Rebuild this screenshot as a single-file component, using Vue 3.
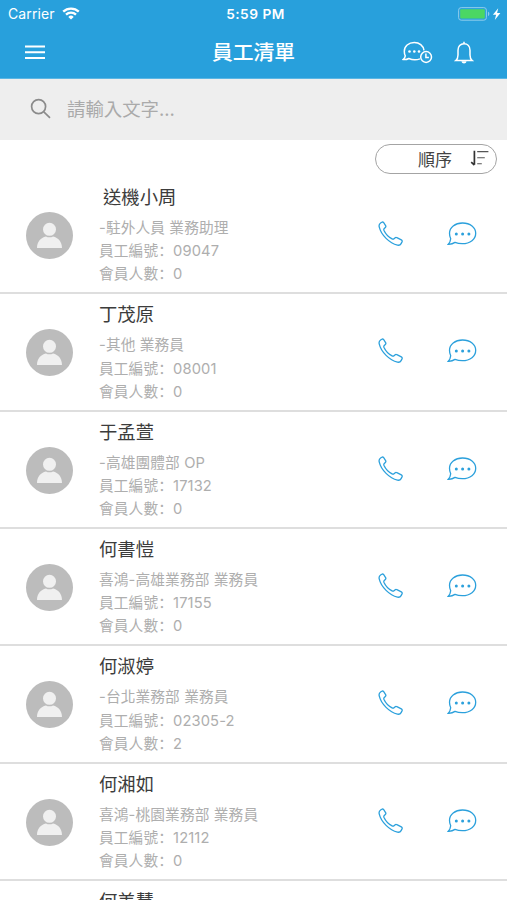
<script setup>
import { ref } from "vue";

const keyword = ref("");

const employees = ref([
  { name: "送機小周", dept: "-駐外人員 業務助理", code: "09047", members: 0, indent: true },
  { name: "丁茂原", dept: "-其他 業務員", code: "08001", members: 0 },
  { name: "于孟萱", dept: "-高雄團體部 OP", code: "17132", members: 0 },
  { name: "何書愷", dept: "喜鴻-高雄業務部 業務員", code: "17155", members: 0 },
  { name: "何淑婷", dept: "-台北業務部 業務員", code: "02305-2", members: 2 },
  { name: "何湘如", dept: "喜鴻-桃園業務部 業務員", code: "12112", members: 0 },
  { name: "何美慧" },
]);
</script>

<template>
  <div class="screen">
    <header>
      <div class="status-bar">
        <div class="carrier">
          <span>Carrier</span>
          <svg class="wifi" viewBox="0 0 18 13">
            <path d="M1.2 4.7a11.2 11.2 0 0 1 15.6 0M4 7.6a7.2 7.2 0 0 1 10 0" />
            <path class="wifi-dot" d="M9 12.6 6.3 9.9a3.9 3.9 0 0 1 5.4 0z" />
          </svg>
        </div>
        <span class="time">5:59 PM</span>
        <svg class="battery" viewBox="0 0 44 14">
          <rect x=".6" y=".6" width="27.8" height="12.6" rx="2.6" class="battery-case" />
          <rect x="2.2" y="2.2" width="24.6" height="9.4" rx="1" class="battery-level" />
          <path class="battery-tip" d="M30 4.8c1.8.5 1.8 3.7 0 4.200z" />
          <path class="bolt" d="M40.2 1.2 34.900 7.800h3.200l-1.300 5.200 5.600-7.100h-3.300z" />
        </svg>
      </div>

      <nav>
        <svg class="menu" viewBox="0 0 20 15">
          <path d="M0 1.6h20M0 7.3h20M0 13h20" />
        </svg>
        <h1>員工清單</h1>
        <div class="nav-actions">
          <svg class="chat-clock" viewBox="0 0 31 23">
            <path d="M22 9.300C21.300 4.600 17.300 1.500 12.300 1.500 6.500 1.500 2.300 5.300 2.300 10.300c0 2.100.3 3.300 1 4.500-.2 1.400-.9 2.600-2.200 3.700 2 .3 4.100-.1 5.700-1 3 1.300 7.700 1.600 11.200.4" />
            <circle cx="24.1" cy="16" r="5.4" />
            <path d="M23.900 12.600v3.800h3" />
            <g class="dots">
              <circle cx="7.500" cy="10.500" r="1.300" />
              <circle cx="12.300" cy="10.500" r="1.300" />
              <circle cx="17" cy="10.500" r="1.300" />
            </g>
          </svg>
          <svg class="bell" viewBox="0 0 20 24">
            <path d="M1.800 19.500c1.700-1.300 2.200-3 2.200-5.500V9.300C4 5.400 6.400 2.800 10 2.800s6 2.600 6 6.500V14c0 2.500.5 4.200 2.200 5.500zM10 .8v2" />
            <path class="clapper" d="M7.500 20.300h5c-.3 3-4.700 3-5 0z" />
          </svg>
        </div>
      </nav>
    </header>

    <div class="search">
      <svg viewBox="0 0 22 22">
        <circle cx="8.600" cy="8.600" r="7" />
        <path d="m13.800 13.800 6.200 6" />
      </svg>
      <input v-model="keyword" type="text" placeholder="請輸入文字..." />
    </div>

    <div class="toolbar">
      <button class="sort">
        <span>順序</span>
        <svg viewBox="0 0 19 16">
          <path class="sort-arrow" d="M4.400.8v14M1.200 12.200l3.200 2.800" />
          <path d="M7.200 1.600h11.200M7.200 7.800h7.600M7.200 13.800h4.600" />
        </svg>
      </button>
    </div>

    <ul class="list">
      <li v-for="employee in employees" :key="employee.name" class="row">
        <svg class="avatar" viewBox="0 0 47 47">
          <circle class="avatar-bg" cx="23.500" cy="23.500" r="23.500" />
          <circle cx="23.500" cy="17.300" r="6.500" />
          <path d="M11 36c0-6.500 3.800-10.400 8.900-11.600 2.200 1.200 5 1.200 7.200 0C32.200 25.600 36 29.500 36 36z" />
        </svg>
        <div class="info">
          <h2 :class="{ indent: employee.indent }">{{ employee.name }}</h2>
          <template v-if="employee.code">
            <p>{{ employee.dept }}</p>
            <p>員工編號<span class="colon">：</span>{{ employee.code }}</p>
            <p>會員人數<span class="colon">：</span>{{ employee.members }}</p>
          </template>
        </div>
        <svg class="phone" viewBox="0 0 26 26">
          <path d="M2.600 2 3.700 1.300C4.400.8 5.200 1 5.700 1.700L7.600 4.600C8 5.300 7.900 6 7.300 6.500L6.300 7.400C5.700 8 5.700 8.700 6 9.400 7.600 12.900 10.500 15.900 14.100 17.900 14.800 18.300 15.500 18.200 16 17.700L16.900 16.900C17.500 16.400 18.200 16.300 18.900 16.700L23.300 18.900C24.100 19.300 24.400 20.100 24 20.900L23.100 22.600C22.400 23.900 21.100 24.500 19.500 24.100 11.500 22.300 3.100 14 1.300 6.200.8 4.500 1.200 2.900 2.600 2z" />
        </svg>
        <svg class="chat" viewBox="0 0 30 24">
          <path d="M15.500 1C8 1 2.500 5.400 2.500 11.300c0 2.300.4 3.800 1.200 5.400-.2 2-.9 3.900-2.400 5.600 2.700.1 4.900-.6 6.700-1.900 2 .8 4.500 1.300 7.200 1.300C23.300 21.700 28.700 17.200 28.700 11.300S23.300 1 15.500 1z" />
          <g class="dots">
            <circle cx="9.300" cy="12" r="1.500" />
            <circle cx="15.600" cy="12" r="1.500" />
            <circle cx="21.900" cy="12" r="1.500" />
          </g>
        </svg>
      </li>
    </ul>
  </div>
</template>

<style>
body {
  margin: 0;
  background: #fff;
}
</style>

<style scoped>
.screen {
  height: 900px;
  overflow: hidden;
  display: flex;
  flex-direction: column;
  background: #fff;
  font-family: Inter, "Noto Sans CJK TC", sans-serif;
}

svg {
  display: block;
  flex: none;
  fill: none;
}

header {
  height: 79px;
  flex: none;
  box-sizing: border-box;
  background: #28a0dc;
  border-bottom: 1px solid #5bb6e4;
  color: #fff;
}

.status-bar {
  display: grid;
  grid-template-columns: 1fr auto 1fr;
  align-items: center;
  height: 27px;
  padding: 0 5px 0 8px;
  font-size: 14px;
}

.carrier {
  display: flex;
  align-items: center;
  gap: 7px;
  letter-spacing: 0.1px;
}

.wifi {
  width: 18px;
  height: 13px;
  stroke: #fff;
  stroke-width: 2.3;
}

.wifi-dot {
  fill: #fff;
  stroke: none;
}

.time {
  font-size: 13.7px;
  font-weight: 600;
  letter-spacing: 0.5px;
  margin-left: 1px;
}

.battery {
  width: 44px;
  height: 14px;
  justify-self: end;
}

.battery-case {
  stroke: #8fccec;
}

.battery-level {
  fill: #4bd763;
}

.battery-tip {
  fill: #8fccec;
}

.bolt {
  fill: #fff;
}

nav {
  display: grid;
  grid-template-columns: 1fr auto 1fr;
  align-items: center;
  height: 51px;
  padding: 0 33px 0 25px;
}

.menu {
  width: 20px;
  height: 15px;
  stroke: #fff;
  stroke-width: 2;
}

h1 {
  margin: 1px 0 0 8px;
  font-size: 20.8px;
  font-weight: 500;
  line-height: 30px;
}

.nav-actions {
  display: flex;
  align-items: center;
  justify-content: flex-end;
  gap: 21px;
  stroke: #fff;
  stroke-width: 1.5;
}

.chat-clock {
  width: 31px;
  height: 23px;
}

.bell {
  width: 20px;
  height: 24px;
}

.nav-actions .dots,
.clapper {
  fill: #fff;
  stroke: none;
}

.search {
  display: flex;
  align-items: center;
  gap: 15px;
  height: 61px;
  flex: none;
  box-sizing: border-box;
  padding: 0 30px 1px;
  background: #eee;
}

.search svg {
  width: 22px;
  height: 22px;
  stroke: #8b8b8b;
  stroke-width: 1.7;
}

.search input {
  flex: 1;
  padding: 0;
  border: none;
  outline: none;
  background: none;
  font-family: inherit;
  font-size: 18.4px;
  color: #555;
}

.search input::placeholder {
  color: #aaa;
}

.toolbar {
  display: flex;
  justify-content: flex-end;
  height: 37px;
  flex: none;
  box-sizing: border-box;
  padding: 4px 10px 0 0;
}

.sort {
  display: flex;
  align-items: center;
  justify-content: flex-end;
  gap: 18px;
  width: 122px;
  height: 30px;
  padding: 0 7px 2px 0;
  border: 1px solid #a4a4a4;
  border-radius: 15px;
  background: #fff;
  font-family: inherit;
  font-size: 17px;
  color: #444;
}

.sort svg {
  width: 19px;
  height: 16px;
  stroke: #555;
  stroke-width: 1.1;
}

.sort .sort-arrow {
  stroke: #333;
  stroke-width: 1.7;
}

.list {
  margin: 0;
  padding: 0;
  list-style: none;
}

.row {
  display: flex;
  align-items: center;
  height: 117.33px;
  box-sizing: border-box;
  padding: 0 30px 0 26px;
  border-bottom: 2px solid #dedede;
}

.avatar {
  width: 47px;
  height: 47px;
  margin-right: 26px;
  margin-top: 2px;
  fill: #f0f0f0;
}

.avatar-bg {
  fill: #bcbcbc;
}

.info {
  flex: 1;
  align-self: flex-start;
  padding-top: 7px;
}

h2 {
  height: 26px;
  margin: 0 0 7px;
  font-size: 18.35px;
  font-weight: 400;
  line-height: 26px;
  color: #3c3c3c;
}

.indent {
  padding-left: 4px;
}

p {
  height: 23.2px;
  margin: 0;
  font-size: 14.7px;
  line-height: 23.2px;
  letter-spacing: 0.12px;
  color: #aeaeae;
}

/* the SC glyph sits at the left of its cell */
.colon {
  font-family: "Noto Sans CJK SC", sans-serif;
  line-height: 0;
}

.phone {
  width: 26px;
  height: 26px;
  margin-right: 43px;
  margin-bottom: 1px;
  stroke: #2ba0dc;
  stroke-width: 1.3;
}

.chat {
  width: 30px;
  height: 24px;
  margin-bottom: 1px;
  stroke: #2ba0dc;
  stroke-width: 1.3;
}

.chat .dots {
  fill: #2ba0dc;
  stroke: none;
}
</style>
